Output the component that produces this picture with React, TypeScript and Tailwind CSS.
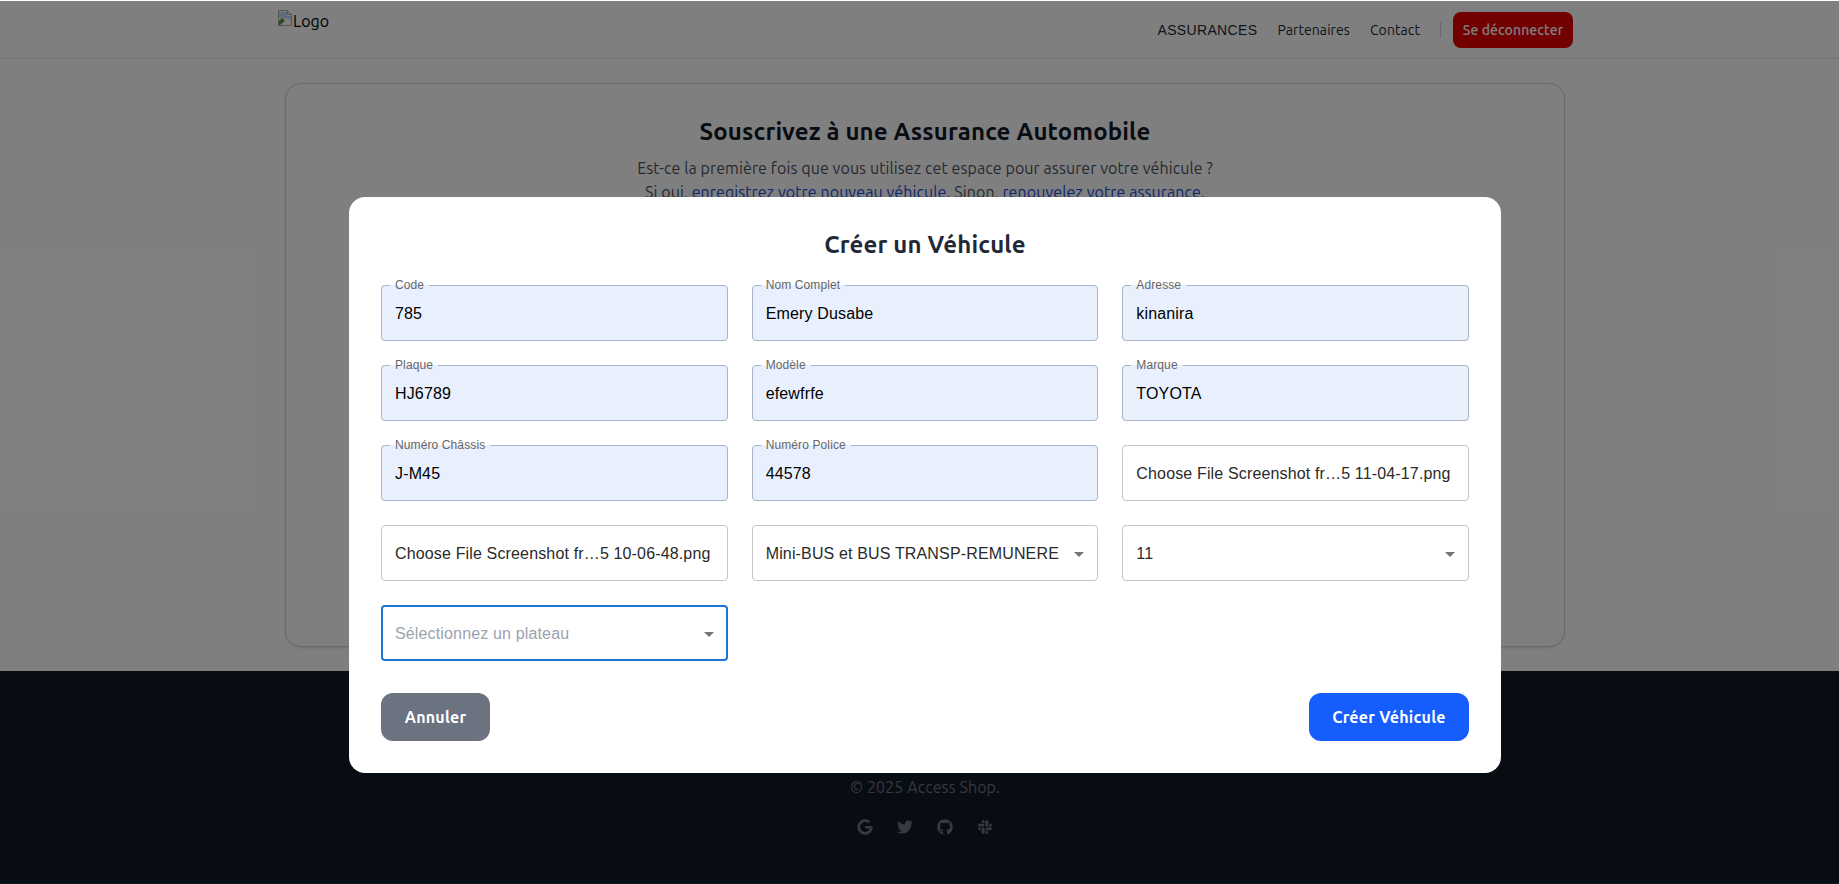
import React from "react";
import { FaGoogle, FaTwitter, FaGithub, FaSlack } from "react-icons/fa";

const UI = "font-['Ubuntu','Noto_Sans',sans-serif]";
const AR = "font-['Liberation_Sans',Arial,sans-serif]";

function Field({ label, value }: { label: string; value: string }) {
  return (
    <div className="relative h-14">
      <input
        readOnly
        value={value}
        className={`${AR} h-full w-full rounded bg-[#e8f0fe] px-3.5 pt-[2px] text-base tracking-[0.00938em] text-black outline-none`}
      />
      <fieldset className="pointer-events-none absolute inset-x-0 -top-[5px] bottom-0 m-0 rounded border border-[#a9b4c6] px-2">
        <legend className={`${AR} px-[5px] text-xs leading-[10px] tracking-[0.00938em] text-[#666666]`}>{label}</legend>
      </fieldset>
    </div>
  );
}

function Box({ children, select, active, muted }: { children: React.ReactNode; select?: boolean; active?: boolean; muted?: boolean }) {
  return (
    <div
      className={`${AR} flex h-14 items-center justify-between rounded bg-white pt-[2px] text-base tracking-[0.00938em] ${
        active ? "border-2 border-[#1976d2] pl-[12px] pr-[12px]" : `border border-[#c4c4c4] pl-[13px] ${select ? "pr-[13px]" : "pr-3.5"}`
      } ${muted ? "text-[#9ca3af]" : "text-[#2a2a2a]"}`}
    >
      <span className="truncate">{children}</span>
      {select && <span className="ml-3 h-0 w-0 shrink-0 border-x-[5px] border-t-[5px] border-x-transparent border-t-[#757575]" />}
    </div>
  );
}

function BrokenImage() {
  return (
    <svg width="16" height="16" viewBox="0 0 16 16" className="shrink-0">
      <path d="M1.5.5h9l4 4v11h-13z" fill="#fff" stroke="#a8a8a8" />
      <path d="M10.5.5v4h4" fill="#e8e8e8" stroke="#a8a8a8" />
      <path d="M2 2h8v4h4v4l-5-2-3 2-4-3z" fill="#c3d4ee" />
      <path d="M2 15v-4l3-3 3 3-5 4z" fill="#4f9a3a" />
      <path d="M8 11l6-1v5H4z" fill="#fff" />
    </svg>
  );
}

export default function App() {
  return (
    <div className={`${UI} relative flex h-[884px] flex-col overflow-hidden bg-white`}>
      <header className="h-[59px] shrink-0 border-b border-gray-200 bg-white">
        <div className="flex h-full items-start justify-between pl-[277px] pr-[266px]">
          <div className="mt-[10px] flex items-start text-base leading-[22px] text-black">
            <BrokenImage />
            <span>Logo</span>
          </div>
          <nav className="mt-3 flex h-9 items-center text-sm tracking-[0.006em] text-[#1f2937]">
            <span className={`${AR} mr-5 tracking-[0.025em]`}>ASSURANCES</span>
            <span className="mr-5">Partenaires</span>
            <span>Contact</span>
            <span className="ml-5 mr-3 h-4 w-px bg-gray-300" />
            <span className="flex h-9 w-[120px] items-center justify-center rounded-lg bg-[#e60000] font-medium text-white">
              Se déconnecter
            </span>
          </nav>
        </div>
      </header>

      <main className="flex-1 pl-[285px] pr-[274px] pt-6">
        <div className="flex h-[564px] flex-col items-center rounded-2xl border border-gray-300 bg-white pt-8 shadow-sm">
          <h1 className="text-2xl font-bold tracking-[0.006em] text-[#111827]">Souscrivez à une Assurance Automobile</h1>
          <p className="mt-2 text-center text-base leading-6 tracking-[0.006em] text-[#4b5563]">
            Est-ce la première fois que vous utilisez cet espace pour assurer votre véhicule ?<br />
            Si oui, <span className="text-[#1d4ed8]">enregistrez votre nouveau véhicule</span>. Sinon,{" "}
            <span className="text-[#1d4ed8]">renouvelez votre assurance</span>.
          </p>
        </div>
      </main>

      <footer className="flex h-[213px] shrink-0 flex-col items-center justify-end bg-[#111827] pb-[49px] pl-[11px] text-[#6b7280]">
        <p className="text-base tracking-[0.006em]">© 2025 Access Shop.</p>
        <div className="mt-[20px] flex gap-6 text-sm text-[#6b7280]">
          <FaGoogle size={16} />
          <FaTwitter size={16} />
          <FaGithub size={16} />
          <FaSlack size={16} />
        </div>
      </footer>

      <div className="absolute inset-x-0 top-px bottom-px flex items-start justify-center bg-black/50 pt-[196px]">
        <div className="ml-[11px] w-[1152px] rounded-2xl bg-white p-8">
          <h2 className="mb-6 text-center text-2xl font-bold leading-8 tracking-[0.006em] text-[#1f2937]">Créer un Véhicule</h2>
          <div className="grid grid-cols-3 gap-6">
            <Field label="Code" value="785" />
            <Field label="Nom Complet" value="Emery Dusabe" />
            <Field label="Adresse" value="kinanira" />
            <Field label="Plaque" value="HJ6789" />
            <Field label="Modèle" value="efewfrfe" />
            <Field label="Marque" value="TOYOTA" />
            <Field label="Numéro Châssis" value="J-M45" />
            <Field label="Numéro Police" value="44578" />
            <Box>Choose File Screenshot fr…5 11-04-17.png</Box>
            <Box>Choose File Screenshot fr…5 10-06-48.png</Box>
            <Box select>Mini-BUS et BUS TRANSP-REMUNERE</Box>
            <Box select>11</Box>
            <Box select active muted>Sélectionnez un plateau</Box>
          </div>
          <div className="mt-8 flex justify-between">
            <button className="h-12 w-[109px] rounded-xl bg-[#6b7280] font-bold tracking-[0.015em] text-white">Annuler</button>
            <button className="h-12 w-40 rounded-xl bg-[#155dfc] font-bold tracking-[0.015em] text-white">Créer Véhicule</button>
          </div>
        </div>
      </div>
    </div>
  );
}
